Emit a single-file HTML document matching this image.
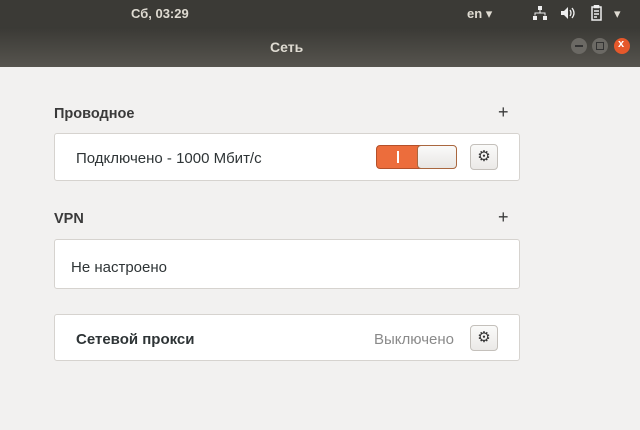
<!DOCTYPE html>
<html><head><style>
body{margin:0;width:640px;height:430px;background:#f2f1f0;font-family:"Liberation Sans","DejaVu Sans",sans-serif;position:relative;overflow:hidden;font-size:15px;color:#2e3436}
.top{position:absolute;left:0;top:0;width:640px;height:27px;background:#3b3a36;color:#dfdbd2;font-weight:bold;font-size:13px}
.title{position:absolute;left:0;top:27px;width:640px;height:40px;background:linear-gradient(#3a3935,#56544e);color:#dfdbd2;font-weight:bold;font-size:14px}
.card{position:absolute;left:54px;width:466px;background:#fff;border:1px solid #d6d3cf;border-radius:3px;box-sizing:border-box}
.h{position:absolute;font-weight:bold;font-size:14.5px;color:#3a3a3a}
.plus{position:absolute;font-size:18px;color:#3a3a3a}
.gear{position:absolute;width:28px;height:26px;border:1px solid #c4c0bb;border-radius:4px;background:linear-gradient(#fafaf9,#ebe9e7);box-sizing:border-box;text-align:center;line-height:23px;font-size:15px;color:#333}
.btn{position:absolute;top:11px;width:16px;height:16px;border-radius:50%;background:#6b6964}
</style></head><body>
<div class="top">
<span style="position:absolute;left:131px;top:6px">Сб, 03:29</span>
<span style="position:absolute;left:467px;top:6px">en ▾</span>
<svg style="position:absolute;left:533px;top:6px" width="14" height="14" viewBox="0 0 14 14" fill="#eee"><rect x="5" y="0" width="4" height="4"/><rect x="6.5" y="4" width="1" height="3"/><rect x="1.5" y="6.5" width="11" height="1"/><rect x="1.5" y="6.5" width="1" height="3"/><rect x="11.5" y="6.5" width="1" height="3"/><rect x="0" y="10" width="4" height="4"/><rect x="10" y="10" width="4" height="4"/></svg>
<svg style="position:absolute;left:560px;top:6px" width="16" height="14" viewBox="0 0 16 14" fill="#eee"><path d="M1 5h3l4-4v12l-4-4H1z"/><path d="M10 4q2 3 0 6M12 2q4 5 0 10" stroke="#eee" fill="none" stroke-width="1.3"/></svg>
<svg style="position:absolute;left:590px;top:5px" width="14" height="16" viewBox="0 0 14 16" fill="none" stroke="#eee" stroke-width="1.5"><rect x="2" y="2" width="9" height="13"/><rect x="4.5" y="0.5" width="4" height="2" fill="#eee"/><path d="M4 6h5M4 9h5M4 12h3"/></svg>
<span style="position:absolute;left:614px;top:6px">▾</span>
</div>
<div class="title">
<span style="position:absolute;left:270px;top:12px">Сеть</span>
<div class="btn" style="left:571px"></div><div class="btn" style="left:592px"></div><div class="btn" style="left:614px;background:#e5582b"></div>
<div style="position:absolute;left:575px;top:18px;width:8px;height:2px;background:#333"></div>
<div style="position:absolute;left:596px;top:15px;width:6px;height:6px;border:1px solid #333"></div>
<span style="position:absolute;left:618px;top:11px;color:#fff;font-size:11px">x</span>
</div>
<div class="h" style="left:54px;top:106px">Проводное</div><div class="plus" style="left:498px;top:102px">+</div>
<div class="card" style="top:133px;height:48px">
<span style="position:absolute;left:21px;top:16px">Подключено - 1000 Мбит/с</span>
<div style="position:absolute;left:321px;top:11px;width:80px;height:24px;border-radius:4px;background:#ec6d3c;border:1px solid #b4502a;box-sizing:border-box">
<div style="position:absolute;left:20px;top:5px;width:2px;height:12px;background:#fff"></div>
<div style="position:absolute;left:40px;top:-1px;width:40px;height:24px;border-radius:4px;background:linear-gradient(#fafafa,#e8e6e3);border:1px solid #a9673f;box-sizing:border-box"></div></div>
<div class="gear" style="left:415px;top:10px">⚙</div>
</div>
<div class="h" style="left:54px;top:211px">VPN</div><div class="plus" style="left:498px;top:207px">+</div>
<div class="card" style="top:239px;height:50px"><span style="position:absolute;left:16px;top:19px">Не настроено</span></div>
<div class="card" style="top:314px;height:47px">
<span style="position:absolute;left:21px;top:16px;font-weight:bold">Сетевой прокси</span>
<span style="position:absolute;left:319px;top:16px;color:#8a8a8a">Выключено</span>
<div class="gear" style="left:415px;top:10px">⚙</div>
</div>
</body></html>
